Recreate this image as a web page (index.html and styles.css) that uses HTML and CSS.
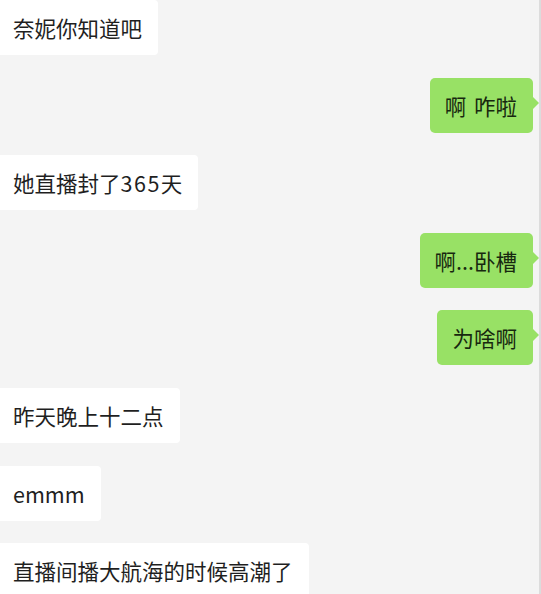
FILE: index.html
```html
<!DOCTYPE html>
<html lang="zh-CN">
<head>
  <meta charset="UTF-8">
  <title>聊天记录</title>
  <meta name="viewport" content="width=device-width, initial-scale=1">
  <link rel="stylesheet" href="styles.css">
</head>
<body>
  <div class="chat">
    <div class="msg other">奈妮你知道吧</div>
    <div class="msg me">啊 咋啦</div>
    <div class="msg other">她直播封了<span class="num">365</span>天</div>
    <div class="msg me">啊...卧槽</div>
    <div class="msg me">为啥啊</div>
    <div class="msg other">昨天晚上十二点</div>
    <div class="msg other">emmm</div>
    <div class="msg other">直播间播大航海的时候高潮了</div>
  </div>
</body>
</html>
```

FILE: styles.css
```css
:root {
  --bg: #f4f4f4;
  --green: #98e165;
  --radius: 4px;
}

* {
  box-sizing: border-box;
}

body {
  margin: 0;
  background: var(--bg);
  font-family: "Noto Sans CJK SC", "Noto Sans", sans-serif;
  height: 100vh;
  overflow: hidden;
}

.chat {
  display: flex;
  flex-direction: column;
  gap: 22.6px;
  height: 100%;
  padding-right: 8px;
  border-right: 2px solid #dcdcdc;
}

.msg {
  position: relative;
  font-size: 21.5px;
  line-height: 25px;
  padding: 15px 16px 15px 13px;
  white-space: nowrap;
  flex-shrink: 0;
}

.num {
  letter-spacing: 1.5px;
}

.other {
  align-self: flex-start;
  background: #fff;
  color: #1f1f1f;
  border-radius: 0 var(--radius) var(--radius) 0;
}

.me {
  align-self: flex-end;
  background: var(--green);
  color: #17280f;
  padding-left: 15px;
  margin-right: -2px;
  border-radius: 5px;
  word-spacing: 3px;
}

.me::after {
  content: "";
  position: absolute;
  right: -6px;
  top: 19px;
  border-left: 6px solid var(--green);
  border-top: 6px solid transparent;
  border-bottom: 6px solid transparent;
}
```
